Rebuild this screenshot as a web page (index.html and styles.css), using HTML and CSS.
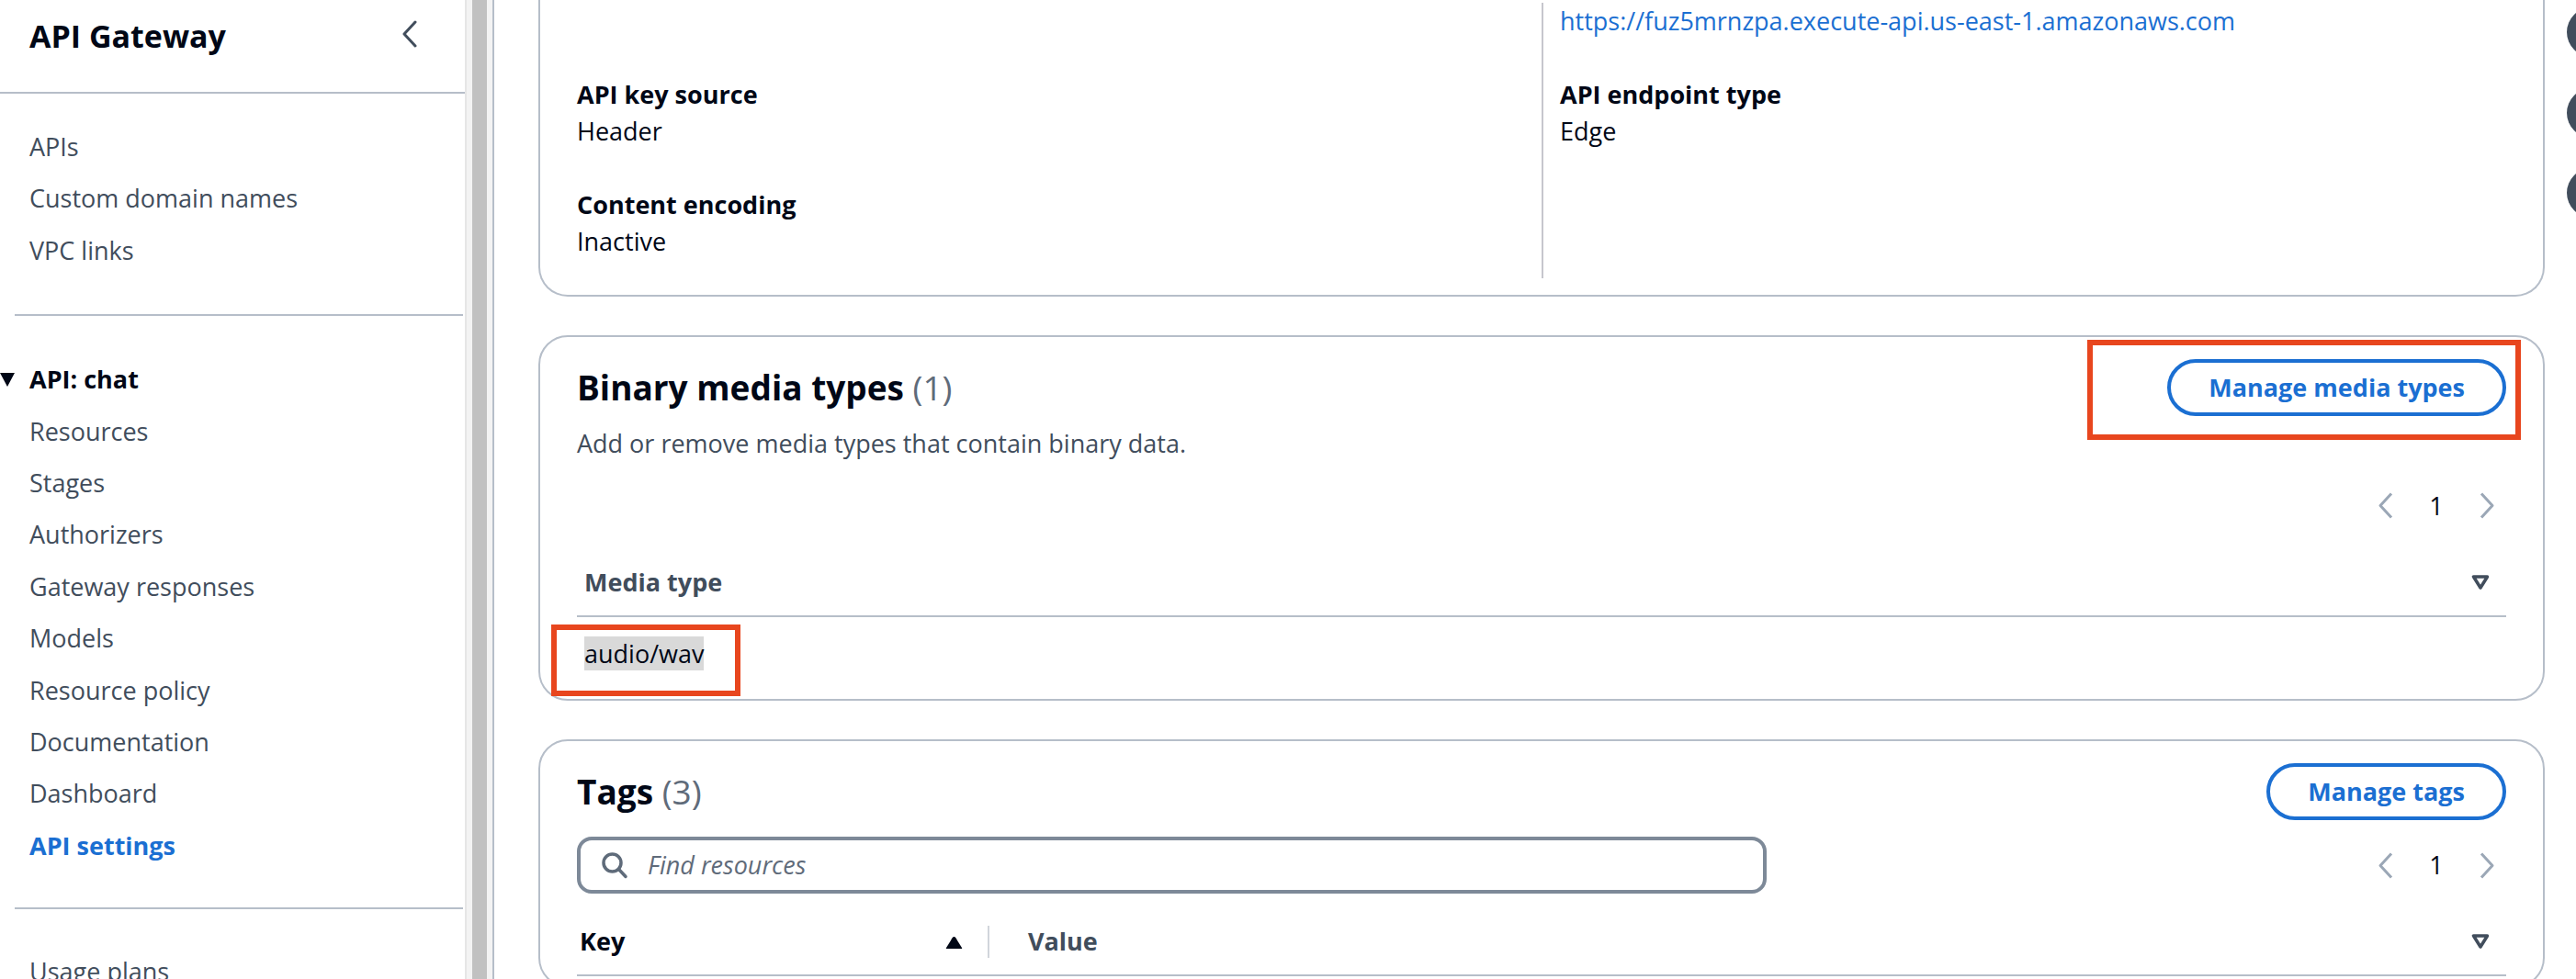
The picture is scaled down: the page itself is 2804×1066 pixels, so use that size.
FILE: index.html
```html
<!DOCTYPE html>
<html lang="en">
<head>
<meta charset="utf-8">
<title>API Gateway - API settings</title>
<link rel="stylesheet" href="styles.css">
</head>
<body>
<div class="app">
  <nav class="sidebar">
    <div class="side-head">
      <h1 class="side-title">API Gateway</h1>
      <svg class="collapse" width="18" height="30" viewBox="0 0 18 30"><polyline points="15,2 3,15 15,28" fill="none" stroke="#414d5c" stroke-width="3" stroke-linecap="round" stroke-linejoin="round"/></svg>
    </div>
    <div class="rule"></div>
    <ul class="nav-group first">
      <li class="nav-item">APIs</li>
      <li class="nav-item">Custom domain names</li>
      <li class="nav-item">VPC links</li>
    </ul>
    <div class="rule inset"></div>
    <div class="nav-group second">
      <div class="nav-section">
        <svg class="caret" width="16" height="15" viewBox="0 0 16 15"><polygon points="0,0 16,0 8,15" fill="#000716"/></svg>
        <span>API: chat</span>
      </div>
      <ul>
        <li class="nav-item">Resources</li>
        <li class="nav-item">Stages</li>
        <li class="nav-item">Authorizers</li>
        <li class="nav-item">Gateway responses</li>
        <li class="nav-item">Models</li>
        <li class="nav-item">Resource policy</li>
        <li class="nav-item">Documentation</li>
        <li class="nav-item">Dashboard</li>
        <li class="nav-item active">API settings</li>
      </ul>
    </div>
    <div class="rule inset"></div>
    <ul class="nav-group third">
      <li class="nav-item">Usage plans</li>
    </ul>
  </nav>
  <div class="scrollbar"><div class="thumb"></div></div>

  <main class="main">
    <section class="card details">
      <div class="kv-grid">
        <div class="kv-col">
          <div class="kv-spacer"></div>
          <div class="kv"><div class="kv-label">API key source</div><div class="kv-value">Header</div></div>
          <div class="kv"><div class="kv-label">Content encoding</div><div class="kv-value">Inactive</div></div>
        </div>
        <div class="kv-col divided">
          <div class="kv-value link">https://fuz5mrnzpa.execute-api.us-east-1.amazonaws.com</div>
          <div class="kv"><div class="kv-label">API endpoint type</div><div class="kv-value">Edge</div></div>
        </div>
      </div>
    </section>

    <section class="card table-card">
      <div class="card-head">
        <div class="head-text">
          <h2 class="card-title">Binary media types <span class="count">(1)</span></h2>
          <p class="card-desc">Add or remove media types that contain binary data.</p>
        </div>
        <button class="btn">Manage media types</button>
      </div>
      <div class="tools end">
        <div class="pager">
          <svg width="19" height="29" viewBox="0 0 19 29"><polyline points="16,1.5 4,14.5 16,27.5" fill="none" stroke="#9ba7b6" stroke-width="3" stroke-linejoin="round"/></svg>
          <span class="page">1</span>
          <svg width="19" height="29" viewBox="0 0 19 29"><polyline points="3,1.5 15,14.5 3,27.5" fill="none" stroke="#9ba7b6" stroke-width="3" stroke-linejoin="round"/></svg>
        </div>
      </div>
      <div class="thead">
        <div class="th media">Media type</div>
        <svg class="sort-none" width="20" height="16" viewBox="0 0 20 16"><polygon points="2.5,2 17.5,2 10,14" fill="none" stroke="#414d5c" stroke-width="3.5" stroke-linejoin="round"/></svg>
      </div>
      <div class="trow"><span class="selected">audio/wav</span></div>
      <div class="mark mark-btn"></div>
      <div class="mark mark-row"></div>
    </section>

    <section class="card table-card">
      <div class="card-head">
        <div class="head-text">
          <h2 class="card-title">Tags <span class="count">(3)</span></h2>
        </div>
        <button class="btn">Manage tags</button>
      </div>
      <div class="tools">
        <div class="search">
          <svg width="30" height="30" viewBox="0 0 30 30"><circle cx="12.5" cy="12.5" r="9.5" fill="none" stroke="#5f6b7a" stroke-width="3.5"/><line x1="19.5" y1="19.5" x2="27" y2="27.5" stroke="#5f6b7a" stroke-width="3.5" stroke-linecap="round"/></svg>
          <span class="placeholder">Find resources</span>
        </div>
        <div class="pager">
          <svg width="19" height="29" viewBox="0 0 19 29"><polyline points="16,1.5 4,14.5 16,27.5" fill="none" stroke="#9ba7b6" stroke-width="3" stroke-linejoin="round"/></svg>
          <span class="page">1</span>
          <svg width="19" height="29" viewBox="0 0 19 29"><polyline points="3,1.5 15,14.5 3,27.5" fill="none" stroke="#9ba7b6" stroke-width="3" stroke-linejoin="round"/></svg>
        </div>
      </div>
      <div class="thead">
        <div class="th key">
          <span>Key</span>
          <svg width="19" height="13" viewBox="0 0 19 13"><path d="M9.5 0 C11 0 12 2 13 4 L18 12 C18.5 13 18 13 17 13 L2 13 C1 13 0.5 13 1 12 L6 4 C7 2 8 0 9.5 0 Z" fill="#000716"/></svg>
        </div>
        <div class="col-sep"></div>
        <div class="th value">Value</div>
        <svg class="sort-none" width="20" height="16" viewBox="0 0 20 16"><polygon points="2.5,2 17.5,2 10,14" fill="none" stroke="#414d5c" stroke-width="3.5" stroke-linejoin="round"/></svg>
      </div>
    </section>
  </main>

  <aside class="rail">
    <div class="rail-dot"></div>
    <div class="rail-dot"></div>
    <div class="rail-dot"></div>
  </aside>
</div>
</body>
</html>
```

FILE: styles.css
```css
* { box-sizing: border-box; margin: 0; padding: 0; }

html, body {
  width: 2804px;
  height: 1066px;
  overflow: hidden;
  background: #ffffff;
}

body {
  font-family: "Open Sans", "Noto Sans", "DejaVu Sans", sans-serif;
  font-size: 27px;
  line-height: 40px;
  color: #000716;
}

ul { list-style: none; }

.app {
  display: flex;
  height: 1066px;
  overflow: hidden;
}

/* ---------- sidebar ---------- */
.sidebar {
  width: 506px;
  flex: none;
}

.side-head {
  height: 100px;
  display: flex;
  align-items: flex-start;
  justify-content: space-between;
  padding: 15px 51px 0 32px;
}

.side-title {
  font-size: 34px;
  line-height: 48px;
  font-weight: 700;
  color: #000716;
}

.collapse { margin-top: 7px; }

.rule {
  height: 2px;
  background: #b6bec9;
}

.rule.inset {
  margin: 0 2px 0 16px;
}

.nav-group.first { padding: 30px 0 40.8px; }
.nav-group.second { padding: 41.3px 0 39.1px; }
.nav-group.third { padding: 40px 0 0; }

.nav-item {
  height: 56.4px;
  line-height: 56.4px;
  padding-left: 32px;
  color: #414d5c;
  white-space: nowrap;
}

.nav-item.active {
  color: #1b6fd2;
  font-weight: 700;
}

.nav-section {
  display: flex;
  align-items: center;
  gap: 16px;
  height: 56.4px;
  line-height: 56.4px;
  font-weight: 700;
  color: #000716;
}

/* ---------- fake scrollbar ---------- */
.scrollbar {
  width: 32px;
  flex: none;
  background: #f3f3f3;
  border-left: 2px solid #e6e6e6;
  border-right: 2px solid #b6bec9;
  padding: 0 6px;
}

.thumb {
  width: 16px;
  height: 100%;
  background: #c1c1c1;
}

/* ---------- main ---------- */
.main {
  flex: 1;
  min-width: 0;
  padding: 0 24px 0 48px;
}

.card {
  position: relative;
  border: 2px solid #b6bec9;
  border-radius: 32px;
  margin-bottom: 42px;
  background: #fff;
}

.card.details {
  border-top: none;
  border-radius: 0 0 32px 32px;
  padding: 2.5px 40px 18.5px;
}

.kv-grid {
  display: grid;
  grid-template-columns: 1fr 1fr;
}

.kv-col {
  display: flex;
  flex-direction: column;
  gap: 40px;
  padding-bottom: 20px;
}

.kv-col.divided {
  border-left: 2px solid #c6c6cd;
  padding-left: 18px;
}

.kv-spacer { height: 40px; }

.kv-label { font-weight: 700; }

.kv-value.link { color: #1b6fd2; white-space: nowrap; }

/* ---------- table cards ---------- */
.table-card {
  padding: 24px 40px 9.5px;
}

.card-head {
  display: flex;
  justify-content: space-between;
  align-items: flex-start;
}

.card-title {
  margin-top: 7px;
  font-size: 37px;
  line-height: 48px;
  font-weight: 700;
  color: #000716;
}

.count {
  font-weight: 400;
  color: #5f6b7a;
}

.card-desc {
  margin-top: 16.5px;
  color: #414d5c;
}

.btn {
  height: 62px;
  padding: 0 41px;
  border: 4px solid #1b6fd2;
  border-radius: 32px;
  background: #fff;
  color: #1b6fd2;
  font-family: inherit;
  font-size: 27px;
  font-weight: 700;
  line-height: 54px;
  white-space: nowrap;
}

.tools {
  margin-top: 18px;
  height: 62px;
  display: flex;
  align-items: center;
  justify-content: space-between;
}

.tools.end {
  margin-top: 17px;
  justify-content: flex-end;
}

.pager {
  display: flex;
  align-items: center;
  gap: 16px;
  padding-right: 11px;
}

.page {
  width: 60px;
  text-align: center;
  color: #000716;
}

.search {
  width: 1295px;
  height: 62px;
  border: 4px solid #7d8998;
  border-radius: 16px;
  display: flex;
  align-items: center;
  padding-left: 22px;
  gap: 21px;
}

.placeholder {
  font-style: italic;
  color: #5f6b7a;
}

.thead {
  margin-top: 32px;
  display: flex;
  align-items: center;
  padding-bottom: 16px;
  border-bottom: 2px solid #b6bec9;
}

.th {
  font-weight: 700;
  color: #414d5c;
}

.th.media {
  flex: 1;
  padding-left: 8px;
}

.th.key {
  width: 447px;
  padding: 0 27px 0 3px;
  display: flex;
  justify-content: space-between;
  align-items: center;
  color: #000716;
}

.th.key svg { margin-top: 3px; }

.col-sep {
  width: 2px;
  height: 35px;
  background: #d1d5db;
}

.th.value {
  flex: 1;
  padding-left: 42px;
}

.sort-none {
  margin-right: 18px;
}

.trow {
  padding: 20px 8px;
}

.selected {
  background: #d9d9d9;
  color: #000716;
}

/* annotation boxes drawn over the screenshot */
.mark {
  position: absolute;
  border: 6px solid #e8461e;
}

.mark-btn {
  left: 1684px;
  top: 3px;
  width: 472px;
  height: 109px;
}

.mark-row {
  left: 12px;
  top: 313px;
  width: 206px;
  height: 78px;
}

/* ---------- right rail ---------- */
.rail {
  width: 10px;
  flex: none;
  overflow: hidden;
  padding-top: 8px;
}

.rail-dot {
  width: 54px;
  height: 54px;
  border-radius: 50%;
  background: #414d5c;
  margin-bottom: 33.5px;
}
```
